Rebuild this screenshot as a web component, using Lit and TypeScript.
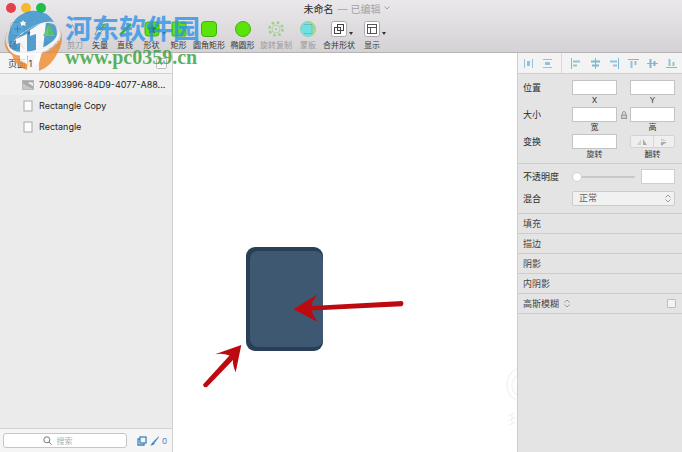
import { LitElement, html, svg, css } from "lit";
import { customElement, property, state } from "lit/decorators.js";
import { classMap } from "lit/directives/class-map.js";

const tools = [
  { label: "插入", faded: false, menu: true },
  { label: "三角网", faded: true, menu: false },
  { label: "剪刀", faded: true, menu: false },
  { label: "矢量", faded: false, menu: false },
  { label: "直线", faded: false, menu: false },
  { label: "形状", faded: false, menu: true },
  { label: "矩形", faded: false, menu: false },
  { label: "圆角矩形", faded: false, menu: false },
  { label: "椭圆形", faded: false, menu: false },
  { label: "旋转复制", faded: true, menu: false },
  { label: "蒙板", faded: true, menu: false },
  { label: "合并形状", faded: false, menu: true },
  { label: "显示", faded: false, menu: true },
];

const G = "#5be30c";
const GS = "#43b012";

const toolIcons: Record<string, unknown> = {
  插入: svg`<rect x="2" y="1.5" width="13" height="13" rx="2" fill="#fff" stroke="#b5b5b5"/><path d="M8.500 4.500v7M5 8h7" stroke="#555"/>`,
  三角网: svg`<path d="M8 2v12H1z" fill="#b9e8ae"/><path d="M8 2l7 12H8z" fill="#5fca4d"/>`,
  剪刀: svg`<path d="M5 3l5 9M11 3l-5 9" stroke="#aaa" fill="none"/>`,
  矢量: svg`<path d="M3 14l2-5 6-6 3 3-6 6z" fill="#ddd" stroke="#999"/><path d="M8 9l5-6" stroke="#45b45c" stroke-width="2"/>`,
  直线: svg`<path d="M3 14L14 3" stroke="#38b63a" stroke-width="2.500"/>`,
  形状: svg`<rect x="1" y="1" width="14" height="14" rx="3" fill=${G} stroke=${GS}/><path d="M8 3l1.500 3.300 3.500.4-2.600 2.400.7 3.500L8 11l-3.100 1.600.7-3.500L3 6.700l3.500-.4z" fill="#247a28"/>`,
  矩形: svg`<rect x="1" y="1" width="14" height="14" rx="1" fill=${G} stroke=${GS}/>`,
  圆角矩形: svg`<rect x=".5" y=".5" width="15" height="15" rx="3.500" fill=${G} stroke=${GS}/>`,
  椭圆形: svg`<circle cx="8" cy="8" r="7.500" fill=${G} stroke=${GS}/>`,
  旋转复制: svg`<circle cx="8" cy="8" r="6.500" fill="none" stroke="#a3cf8d" stroke-width="2.600" stroke-dasharray="2.600 2.500"/><circle cx="8" cy="8" r="4" fill="none" stroke="#b0d5a0"/><circle cx="8" cy="8" r="1" fill="#95cc7b"/>`,
  蒙板: svg`<circle cx="8" cy="8" r="7.500" fill="#a8dc88" stroke="#9fd083"/><path d="M8 .5a7.500 7.500 0 0 0 0 15h3V3H8z" fill="#72dfe6"/><path d="M4 3.500h8v9H4" fill="none" stroke="#60bfc5"/>`,
  合并形状: svg`<rect x=".5" y=".5" width="15" height="15" rx="2" fill="#fff" stroke="#aaa"/><rect x="3.500" y="6.500" width="6" height="6" fill="none" stroke="#444"/><rect x="6.500" y="3.500" width="6" height="6" fill="none" stroke="#444"/>`,
  显示: svg`<rect x=".5" y=".5" width="15" height="15" rx="2" fill="#fff" stroke="#aaa"/><rect x="3.500" y="3.500" width="9" height="9" fill="none" stroke="#555"/><path d="M3.500 6.500h9M6.500 6.500v6" stroke="#555" fill="none"/>`,
};

const alignments = [
  { name: "水平分布", icon: svg`<path d="M1.500 1v9M9.500 1v9" stroke="#8fc4dd"/><rect x="4" y="3" width="3" height="5" fill="#8fc4dd"/>` },
  { name: "垂直分布", icon: svg`<path d="M1 1.500h9M1 9.500h9" stroke="#8fc4dd"/><rect x="3" y="4" width="5" height="3" fill="#8fc4dd"/>` },
  { name: "左对齐", icon: svg`<path d="M1.500 0v11" stroke="#7db9d6"/><path d="M3 3.500h7M3 7.500h4" stroke="#8fc4dd" stroke-width="2"/>` },
  { name: "水平居中", icon: svg`<path d="M5.500 0v11" stroke="#7db9d6"/><path d="M1 3.500h9M2 7.500h7" stroke="#7db9d6" stroke-width="2"/>` },
  { name: "右对齐", icon: svg`<path d="M9.500 0v11" stroke="#7db9d6"/><path d="M1 3.500h7M4 7.500h4" stroke="#8fc4dd" stroke-width="2"/>` },
  { name: "顶部对齐", icon: svg`<path d="M0 1.500h11" stroke="#7db9d6"/><path d="M3.500 3v7M7.500 3v4" stroke="#8fc4dd" stroke-width="2"/>` },
  { name: "垂直居中", icon: svg`<path d="M0 5.500h11" stroke="#7db9d6"/><path d="M3.500 1v9M7.500 3v5" stroke="#7db9d6" stroke-width="2"/>` },
  { name: "底部对齐", icon: svg`<path d="M0 9.500h11" stroke="#7db9d6"/><path d="M3.500 1v7M7.500 4v4" stroke="#8fc4dd" stroke-width="2"/>` },
];

const base = css`
  :host {
    display: block;
    box-sizing: border-box;
  }
  *,
  *::before {
    box-sizing: border-box;
  }
  button,
  input,
  select {
    margin: 0;
    padding: 0;
    border: 0;
    background: none;
    color: inherit;
    font: inherit;
    border-radius: 0;
  }
  svg {
    display: block;
  }
`;

@customElement("title-toolbar")
class TitleToolbar extends LitElement {
  static styles = [
    base,
    css`
      :host {
        background: linear-gradient(#eae8ea, #d4d2d4);
        border-bottom: 1px solid #b5b3b5;
        height: 53px;
      }
      .title {
        display: grid;
        grid-template-columns: 1fr auto 1fr;
        column-gap: 12px;
        align-items: center;
        height: 16px;
        padding-left: 6px;
      }
      .lights {
        display: flex;
        gap: 5px;
      }
      .light {
        width: 10px;
        height: 10px;
        border-radius: 50%;
      }
      .close { background: #e6404b; }
      .minimize { background: #f5b82e; }
      .zoom { background: #1fbf49; }
      .name {
        display: flex;
        align-items: center;
        gap: 4px;
        margin: 0;
        padding-left: 6px;
        font-size: 10px;
        font-weight: 400;
        color: #2c2c2c;
      }
      .edited { color: #a3a1a3; }
      .tools {
        display: grid;
        grid-template-columns: 34px 28px 26px 24px 26px 27px 27px 34px 33px 34px 30px 32px 34px;
      }
      .tool {
        display: flex;
        flex-direction: column;
        align-items: center;
        gap: 2px;
        padding-top: 5px;
        font-size: 8px;
        line-height: 12px;
        color: #383838;
        white-space: nowrap;
      }
      .faded { color: #9c9a9c; }
      .icon { position: relative; }
      .icon svg {
        width: 16px;
        height: 16px;
      }
      .menu::after {
        content: "";
        position: absolute;
        left: 18px;
        bottom: 2px;
        border: 2px solid transparent;
        border-top: 3px solid #333;
        border-bottom: 0;
      }
    `,
  ];

  render() {
    return html`
      <div class="title">
        <div class="lights">
          <button class="light close" aria-label="关闭"></button>
          <button class="light minimize" aria-label="最小化"></button>
          <button class="light zoom" aria-label="缩放"></button>
        </div>
        <h1 class="name">
          未命名 <span class="edited">— 已编辑</span>
          <svg width="6" height="4" viewBox="0 0 6 4"><path d="M.5.5L3 3l2.500-2.500" fill="none" stroke="#a3a1a3" /></svg>
        </h1>
      </div>
      <nav class="tools">
        ${tools.map(
          (t) => html`<button class=${classMap({ tool: true, faded: t.faded })}>
            <span class=${classMap({ icon: true, menu: t.menu })}>
              <svg viewBox="0 0 16 16">${toolIcons[t.label]}</svg>
            </span>
            ${t.label}
          </button>`
        )}
      </nav>
    `;
  }
}

@customElement("layer-list")
class LayerList extends LitElement {
  @state() private layers = [
    { name: "70803996-84D9-4077-A88...", image: true },
    { name: "Rectangle Copy", image: false },
    { name: "Rectangle", image: false },
  ];

  static styles = [
    base,
    css`
      :host {
        display: flex;
        flex-direction: column;
        background: #ebebeb;
        border-right: 1px solid #d2d2d2;
      }
      .pages {
        display: flex;
        align-items: center;
        justify-content: space-between;
        height: 21px;
        padding: 0 5px 0 8px;
        background: #f4f4f4;
        border-bottom: 1px solid #d2d2d2;
        font-size: 9px;
        color: #333;
      }
      .layers {
        flex: 1;
        margin: 0;
        padding: 0;
        list-style: none;
      }
      .layer {
        display: flex;
        align-items: center;
        gap: 5px;
        height: 21px;
        padding-left: 22px;
        font-size: 9px;
        color: #222;
        white-space: nowrap;
      }
      .layer svg {
        width: 12px;
        height: 12px;
      }
      .picture { background: #f0f0f0; }
      .footer {
        display: flex;
        align-items: center;
        gap: 10px;
        height: 24px;
        padding: 0 5px 0 3px;
        background: #f5f5f5;
        border-top: 1px solid #d2d2d2;
      }
      .search {
        display: flex;
        flex: 1;
        align-items: center;
        justify-content: center;
        gap: 4px;
        height: 15px;
        border: 1px solid #c6c6c6;
        border-radius: 3px;
        background: #fff;
      }
      .query {
        width: 30px;
        font-size: 8px;
        outline: 0;
      }
      .query::placeholder { color: #b0b0b0; }
      .filters {
        display: flex;
        align-items: center;
        gap: 3px;
        font-size: 8px;
        color: #3d82bd;
      }
    `,
  ];

  render() {
    return html`
      <div class="pages">
        <span>页面 1</span>
        <button aria-label="显示页面">
          <svg width="11" height="11" viewBox="0 0 11 11"><rect x=".5" y=".5" width="10" height="10" rx="1" fill="#f8f8f8" stroke="#bbb" /><path d="M3.500 4.500h4l-2 2.500z" fill="#777" /></svg>
        </button>
      </div>
      <ul class="layers">
        ${this.layers.map(
          (l) => html`<li class=${classMap({ layer: true, picture: l.image })}>
            <svg viewBox="0 0 12 12">
              ${l.image
                ? svg`<rect x=".5" y="1.500" width="11" height="9" fill="#aaa" stroke="#b8b8b8"/><path d="M1 4.500l5 3 5 2.500H1z" fill="#c8c8c8"/><path d="M6 4l2-1 3 1v3z" fill="#eee"/>`
                : svg`<rect x="2" y="1" width="8" height="10" fill="#fbfbfb" stroke="#a9a9a9"/>`}
            </svg>
            ${l.name}
          </li>`
        )}
      </ul>
      <div class="footer">
        <label class="search">
          <svg width="9" height="9" viewBox="0 0 9 9"><circle cx="3.800" cy="3.800" r="3" fill="none" stroke="#777" /><path d="M6 6l2.500 2.500" stroke="#777" /></svg>
          <input class="query" type="text" placeholder="搜索" aria-label="搜索" />
        </label>
        <div class="filters">
          <svg width="10" height="10" viewBox="0 0 10 10"><rect x="3" y="1" width="6" height="6" fill="none" stroke="#3d82bd" stroke-width="1.300" /><path d="M3 3H1v6h6V7" fill="none" stroke="#3d82bd" stroke-width="1.300" /></svg>
          <svg width="9" height="10" viewBox="0 0 9 10"><path d="M8.800.3L9 1 4.500 7 3 6z" fill="#3d82bd" /><path d="M2.800 6l2 1.500Q3.500 9.500.3 9.500z" fill="#3d82bd" /></svg>
          <span>0</span>
        </div>
      </div>
    `;
  }
}

@customElement("design-canvas")
class DesignCanvas extends LitElement {
  static styles = [
    base,
    css`
      :host {
        overflow: hidden;
        position: relative;
        background: #fff;
      }
      .art {
        position: absolute;
        left: 0;
        top: 0;
        width: 344px;
        height: 399px;
      }
    `,
  ];

  render() {
    return html`
      <svg class="art" viewBox="173 53 344 399" role="img" aria-label="画布">
        <rect x="246" y="247" width="77" height="104" rx="9" fill="#293e57" />
        <rect x="250" y="251" width="73" height="96" rx="8" fill="#3f5871" />
        <path d="M293.300 309.300L317.700 294.300Q312 301 311.700 306L402 301Q405 303.500 402 306.200L311.700 310.500Q313 316 318 322Z" fill="#bd0a10" />
        <path d="M241.300 345L235.700 372.300Q232.500 365 233 360L207 387Q203.500 388 203 384.500L229.500 355.500Q223 353 215 354.300Z" fill="#bd0a10" />
        <g fill="none" stroke="#f4f4f4" stroke-width="1.500">
          <path d="M519 368Q507 373 507 385T519 401" />
          <path d="M519 374Q512 378 512 386T519 395" />
          <path d="M508 416l6-3M508 421l8-4M509 425l7-3M512 414v11" />
        </g>
      </svg>
    `;
  }
}

@customElement("size-field")
class SizeField extends LitElement {
  @property() caption = "";

  static styles = [
    base,
    css`
      .field {
        display: block;
        font-size: 8px;
        line-height: 10px;
        text-align: center;
        color: #333;
      }
      .value {
        display: block;
        width: 100%;
        height: 15px;
        border: 1px solid #c4c4c4;
        background: #fff;
      }
    `,
  ];

  render() {
    return html`<label class="field"><input class="value" type="text" />${this.caption}</label>`;
  }
}

@customElement("style-inspector")
class StyleInspector extends LitElement {
  static styles = [
    base,
    css`
      :host {
        background: #e4e4e4;
        border-left: 1px solid #cdcdcd;
        font-size: 9px;
        line-height: 15px;
        color: #2b2b2b;
      }
      .align {
        display: flex;
        align-items: center;
        justify-content: space-between;
        height: 21px;
        padding: 0 5px;
        background: #f3f3f3;
        border-bottom: 1px solid #cfcfcf;
      }
      .align svg {
        width: 11px;
        height: 11px;
      }
      .rule {
        width: 1px;
        height: 100%;
        background: #d8d8d8;
      }
      .group {
        border-bottom: 1px solid #cdcdcd;
      }
      .geometry {
        display: grid;
        grid-template-columns: 1fr 45px 13px 45px;
        row-gap: 2px;
        padding: 6px 7px 4px 5px;
      }
      .lock {
        display: grid;
        place-items: center;
        height: 15px;
      }
      .flip {
        font-size: 8px;
        line-height: 10px;
        text-align: center;
        color: #333;
      }
      .pair {
        display: grid;
        grid-template-columns: 1fr 1fr;
        height: 13px;
        margin: 1px 0;
        border: 1px solid #d4d4d4;
        border-radius: 2px;
        background: #efefef;
      }
      .half {
        display: grid;
        place-items: center;
      }
      .half + .half { border-left: 1px solid #d9d9d9; }
      .appearance {
        display: grid;
        grid-template-columns: 1fr 103px;
        row-gap: 7px;
        padding: 5px 7px 7px 5px;
      }
      .opacity {
        display: flex;
        align-items: center;
        justify-content: space-between;
      }
      .slider {
        width: 63px;
        height: 10px;
        appearance: none;
      }
      .slider::-webkit-slider-runnable-track {
        height: 2px;
        border-radius: 1px;
        background: #c8c8c8;
      }
      .slider::-webkit-slider-thumb {
        appearance: none;
        width: 10px;
        height: 10px;
        margin-top: -4px;
        border: 1px solid #d0d0d0;
        border-radius: 50%;
        background: #fff;
      }
      .percent {
        width: 34px;
        height: 15px;
        border: 1px solid #cfcfcf;
        background: #fff;
      }
      .picker {
        display: grid;
        align-items: center;
      }
      .picker > * { grid-area: 1 / 1; }
      .picker svg {
        justify-self: end;
        margin-right: 4px;
        pointer-events: none;
      }
      .blend {
        width: 100%;
        height: 15px;
        padding-left: 6px;
        padding-bottom: 2px;
        appearance: none;
        border: 1px solid #cbcbcb;
        border-radius: 2px;
        background: #f1f1f1;
        color: #666;
        font-size: 9px;
        line-height: 11px;
      }
      .section {
        display: flex;
        align-items: center;
        gap: 5px;
        height: 20px;
        padding: 0 6px 0 5px;
        margin: 0;
        border-bottom: 1px solid #cdcdcd;
        font-size: 9px;
        font-weight: 400;
        color: #444;
      }
      .tick {
        width: 9px;
        height: 9px;
        margin-left: auto;
        appearance: none;
        border: 1px solid #bdbdbd;
        border-radius: 1px;
        background: #f3f3f3;
      }
    `,
  ];

  private steppers() {
    return html`<svg width="6" height="9" viewBox="0 0 6 9"><path d="M.5 3.500L3 1l2.500 2.500M.5 5.500L3 8l2.500-2.500" fill="none" stroke="#999" /></svg>`;
  }

  render() {
    return html`
      <div class="align">
        ${alignments.map(
          (a, i) => html`${i === 2 ? html`<span class="rule"></span>` : ""}
            <button aria-label=${a.name}><svg viewBox="0 0 11 11">${a.icon}</svg></button>`
        )}
      </div>
      <div class="group geometry">
        <span>位置</span>
        <size-field caption="X"></size-field>
        <span></span>
        <size-field caption="Y"></size-field>
        <span>大小</span>
        <size-field caption="宽"></size-field>
        <button class="lock" aria-label="锁定比例">
          <svg width="6" height="8" viewBox="0 0 6 8"><path d="M1.500 4V2q0-1.500 1.500-1.500T4.500 2v2" fill="none" stroke="#999" /><rect x=".5" y="4" width="5" height="3.500" fill="#ccc" stroke="#999" /></svg>
        </button>
        <size-field caption="高"></size-field>
        <span>变换</span>
        <size-field caption="旋转"></size-field>
        <span></span>
        <div class="flip">
          <div class="pair">
            <button class="half" aria-label="水平翻转"><svg width="10" height="8" viewBox="0 0 10 8"><path d="M4 1v6H0z" fill="#d0d0d0" /><path d="M6 1v6h4z" fill="#aaa" /></svg></button>
            <button class="half" aria-label="垂直翻转"><svg width="8" height="8" viewBox="0 0 8 8"><path d="M1 0l6 3H1z" fill="#d4d4d4" /><path d="M1 4h6L1 8z" fill="#aaa" /></svg></button>
          </div>
          翻转
        </div>
      </div>
      <div class="group appearance">
        <label for="opacity">不透明度</label>
        <div class="opacity">
          <input class="slider" id="opacity" type="range" value="0" />
          <input class="percent" type="text" aria-label="不透明度数值" />
        </div>
        <label for="blend">混合</label>
        <div class="picker">
          <select class="blend" id="blend"><option>正常</option></select>
          ${this.steppers()}
        </div>
      </div>
      ${["填充", "描边", "阴影", "内阴影"].map((s) => html`<h2 class="section">${s}</h2>`)}
      <label class="section">高斯模糊 ${this.steppers()}<input class="tick" type="checkbox" /></label>
    `;
  }
}

@customElement("site-badge")
class SiteBadge extends LitElement {
  static styles = [
    base,
    css`
      :host {
        display: flex;
        gap: 3px;
        pointer-events: none;
        opacity: 0.8;
      }
      .words {
        display: flex;
        flex-direction: column;
        padding-top: 5px;
        white-space: nowrap;
      }
      .name {
        font-size: 27px;
        line-height: 30px;
        font-weight: 700;
        color: #2f94e6;
      }
      .site {
        font: 700 20px/24px "Liberation Serif", serif;
        color: #35a03b;
      }
    `,
  ];

  render() {
    return html`
      <svg width="58" height="62" viewBox="4 10 58 62">
        <path d="M9 33Q13 15 30 11Q46 9 54 22Q45 20 30 28Q15 36 10 47Q7 40 9 33Z" fill="#3190cc" />
        <path d="M11 47Q16 36 31 28Q47 20 55 25Q61 38 48 46Q34 54 20 54Q13 53 11 47Z" fill="#3190cc" />
        <path d="M9 29Q2 41 9 48Q14 53 28 53L27 70Q15 66 12 55Q3 49 5 39Q6 33 9 29Z" fill="#ee8a2d" />
        <path d="M58 28Q65 36 56 45Q49 52 39 54L39 71Q52 66 58 52Q64 41 61 32Z" fill="#ee8a2d" />
        <path d="M55 23Q63 31 53 41Q40 52 22 52Q10 52 7 43Q8 56 25 56Q43 55 54 45Q65 34 55 23Z" fill="#fff" />
        <path d="M30 30L40 24L46 22L43 48L39 63L33 66L36 49V34L30 36Z" fill="#fff" />
        <path d="M16 39L27 34V64L20 61V43L16 44Z" fill="#fff" />
        <path d="M23 20l1 2 2 0-1 2 1 2-3-1-2 1 0-2-1-2 2 0z" fill="#fff" />
        <path d="M43 36l6-12 6 12z" fill="#58bd70" />
      </svg>
      <div class="words">
        <span class="name">河东软件园</span>
        <span class="site">www.pc0359.cn</span>
      </div>
    `;
  }
}

@customElement("app-root")
class AppRoot extends LitElement {
  static styles = [
    base,
    css`
      :host {
        display: flex;
        flex-direction: column;
        position: relative;
        min-height: 100vh;
        background: #fff;
        font-family: Inter, "Noto Sans CJK SC", sans-serif;
      }
      .workspace {
        display: grid;
        flex: 1;
        grid-template-columns: 173px 1fr 165px;
      }
      .badge {
        position: absolute;
        left: 4px;
        top: 10px;
      }
    `,
  ];

  render() {
    return html`
      <title-toolbar></title-toolbar>
      <main class="workspace">
        <layer-list></layer-list>
        <design-canvas></design-canvas>
        <style-inspector></style-inspector>
      </main>
      <site-badge class="badge"></site-badge>
    `;
  }
}
